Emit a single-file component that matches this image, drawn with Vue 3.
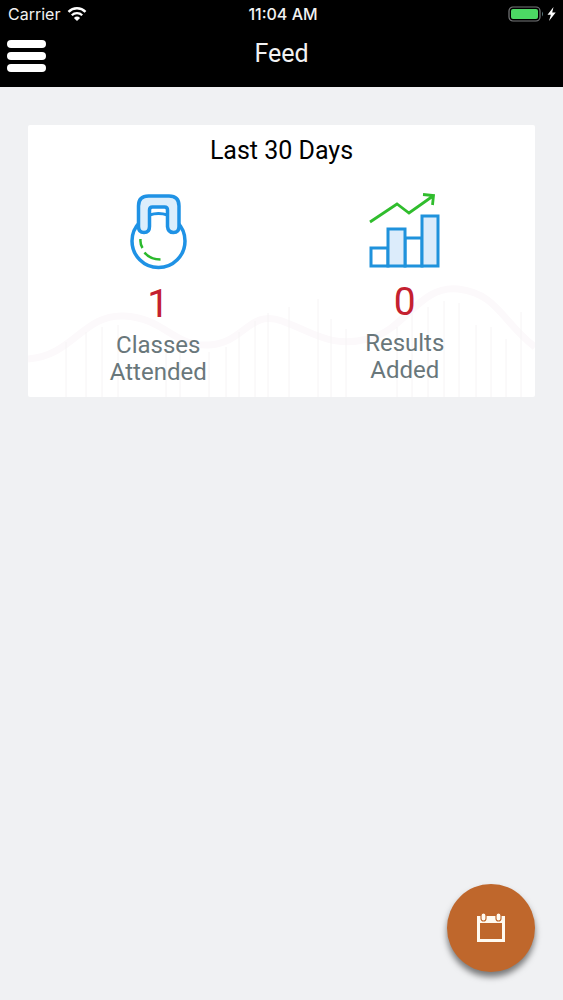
<script setup>
const carrier = 'Carrier'
const time = '11:04 AM'
</script>

<template>
  <div class="screen">
    <header class="top">
      <div class="status">
        <div class="carrier">
          <span>{{ carrier }}</span>
          <svg class="wifi" viewBox="0 0 20 14" width="20" height="14" aria-hidden="true">
            <path d="M1.5 4.8a12.2 12.2 0 0 1 17 0" fill="none" stroke="#fff" stroke-width="2.5" />
            <path d="M4.8 8.2a7.4 7.4 0 0 1 10.4 0" fill="none" stroke="#fff" stroke-width="2.3" />
            <path d="M10 14 6.9 10.9a4.5 4.5 0 0 1 6.2 0z" fill="#fff" />
          </svg>
        </div>
        <span class="time">{{ time }}</span>
        <svg class="battery" viewBox="0 0 50 18" width="50" height="18" aria-hidden="true">
          <rect x="1" y="2" width="31" height="14" rx="4" fill="none" stroke="#77797b" stroke-width="1.2" />
          <rect x="3" y="4" width="27" height="10" rx="2" fill="#4cd964" />
          <path d="M34 6.5q2 2.5 0 5z" fill="#58777d" />
          <path d="M45.5 2 39.5 9.8h3.4L41 16l6.7-8.4h-3.5z" fill="#fff" />
        </svg>
      </div>
      <div class="bar">
        <button class="menu" type="button" aria-label="Menu">
          <i></i><i></i><i></i>
        </button>
        <h1>Feed</h1>
      </div>
    </header>

    <main>
      <section class="card">
        <svg class="backdrop" viewBox="0 0 507 120" preserveAspectRatio="none" aria-hidden="true">
          <path d="M0 82C45 79 55 37 96 39S145 70 181 68 221 32 254 44 302 71 340 62 391 8 430 12 475 46 507 70" fill="none" stroke="#fcf9fb" stroke-width="7" />
          <path d="M38 120V65M58 120V55M74 120V50M90 120V48M138 120V66M152 120V73M181 120V75M198 120V70M211 120V55M227 120V44M240 120V36M261 120V30M290 120V22M303 120V42M318 120V52M369 120V50M384 120V36M400 120V30M416 120V24M431 120V26M448 120V48M463 120V50M478 120V62M493 120V35" fill="none" stroke="#f6f4f5" stroke-width="1" />
        </svg>
        <h2>Last 30 Days</h2>
        <div class="stats">
          <div class="stat">
            <svg viewBox="0 0 60 78" width="60" height="78" aria-hidden="true">
              <circle cx="30.5" cy="48" r="26.5" fill="#fff" stroke="#1f92e5" stroke-width="3.5" />
              <path d="M22 21q8.500-2 17 0v5H22z" fill="#fff" />
              <path d="M21.500 22q9-3 18 0" fill="none" stroke="#1f92e5" stroke-width="3" />
              <path d="M10.500 13Q10.500 3 20.500 3H41Q51 3 51 13V33.500Q51 39.500 45.500 39.500T39.500 33.500V17Q39.500 14 36.500 14H24.500Q21.500 14 21.500 17V33.500Q21.500 39.500 16 39.500T10.500 33.500Z" fill="#dceefc" stroke="#1f92e5" stroke-width="3.500" stroke-linejoin="round" />
              <path d="M12.500 46Q12 51 14.500 55M16.500 59.500Q22 66.500 32.500 66.500" fill="none" stroke="#2bb92d" stroke-width="2.500" />
            </svg>
            <strong>1</strong>
            <span>Classes<br>Attended</span>
          </div>
          <div class="stat">
            <svg viewBox="0 0 72 76" width="72" height="76" aria-hidden="true">
              <g stroke="#1f92dc" stroke-width="3">
                <path d="M2 55H19V73H2Z" fill="#fff" />
                <path d="M36 45H53V73H36Z" fill="#fff" />
                <path d="M19 36H36V73H19Z" fill="#dcecfb" />
                <path d="M53 23H69V73H53Z" fill="#dcecfb" />
              </g>
              <path d="M1 29 28 11 40 20 64 3M54 1.500 64.500 2.500 63.500 12" fill="none" stroke="#30bd2d" stroke-width="2.800" />
            </svg>
            <strong>0</strong>
            <span>Results<br>Added</span>
          </div>
        </div>
      </section>
    </main>

    <button class="fab" type="button" aria-label="Open calendar">
      <svg viewBox="0 0 30 32" width="30" height="32" aria-hidden="true">
        <path fill-rule="evenodd" d="M1 4H29V30H1ZM4 11V27H26V11Z" fill="#fffaf0" />
        <rect x="5" y="1" width="5" height="8" rx="2.500" fill="#fffaf0" stroke="#bf672c" stroke-width="1.200" />
        <rect x="20" y="1" width="5" height="8" rx="2.500" fill="#fffaf0" stroke="#bf672c" stroke-width="1.200" />
      </svg>
    </button>
  </div>
</template>

<style>
body {
  margin: 0;
  background: #f0f1f3;
}
</style>

<style scoped>
.screen {
  min-height: 100vh;
  background: #f0f1f3;
  font-family: Roboto, "Liberation Sans", sans-serif;
}
.top {
  background: #000;
  color: #f2f2f2;
  height: 87px;
}
.status {
  display: grid;
  grid-template-columns: 1fr auto 1fr;
  align-items: center;
  height: 28px;
  padding: 0 5px 0 8px;
  font-family: Inter, sans-serif;
  font-size: 16px;
  line-height: 20px;
}
.carrier {
  display: flex;
  align-items: center;
  gap: 7px;
}
.time {
  font-weight: 500;
}
.battery {
  justify-self: end;
}
.bar {
  display: grid;
  grid-template-columns: 54px 1fr 54px;
  align-items: center;
  height: 52px;
}
.menu {
  display: flex;
  flex-direction: column;
  gap: 4px;
  width: 39px;
  margin: 4px 0 0 7px;
  padding: 0;
  border: 0;
  background: none;
  cursor: pointer;
}
.menu i {
  height: 8px;
  border-radius: 4px;
  background: #fff;
}
h1, h2 {
  margin: 0;
  font-size: 25px;
  font-weight: 400;
  line-height: 28px;
  text-align: center;
}
main {
  padding: 38px 28px;
}
.card {
  position: relative;
  padding: 12px 7px 11px;
  border-radius: 2px;
  background: #fff;
}
.backdrop {
  position: absolute;
  left: 0;
  bottom: 0;
  width: 100%;
  height: 120px;
}
h2 {
  position: relative;
  color: #000;
}
.stats {
  position: relative;
  display: grid;
  grid-template-columns: 1fr 1fr;
  align-items: start;
  margin-top: 28px;
}
.stat {
  display: flex;
  flex-direction: column;
  align-items: center;
  text-align: center;
}
.stat strong {
  margin-top: 11px;
  color: #c4202f;
  font-size: 39px;
  font-weight: 400;
  line-height: 44px;
}
.stat span {
  margin-top: 6px;
  color: #69777b;
  font-size: 24px;
  line-height: 27px;
}
.fab {
  position: fixed;
  right: 28px;
  bottom: 28px;
  display: flex;
  align-items: center;
  justify-content: center;
  width: 88px;
  height: 88px;
  padding: 0;
  border: 0;
  border-radius: 50%;
  background: #bf672c;
  box-shadow: 0 5px 6px rgba(0, 0, 0, 0.5);
  cursor: pointer;
}
</style>
